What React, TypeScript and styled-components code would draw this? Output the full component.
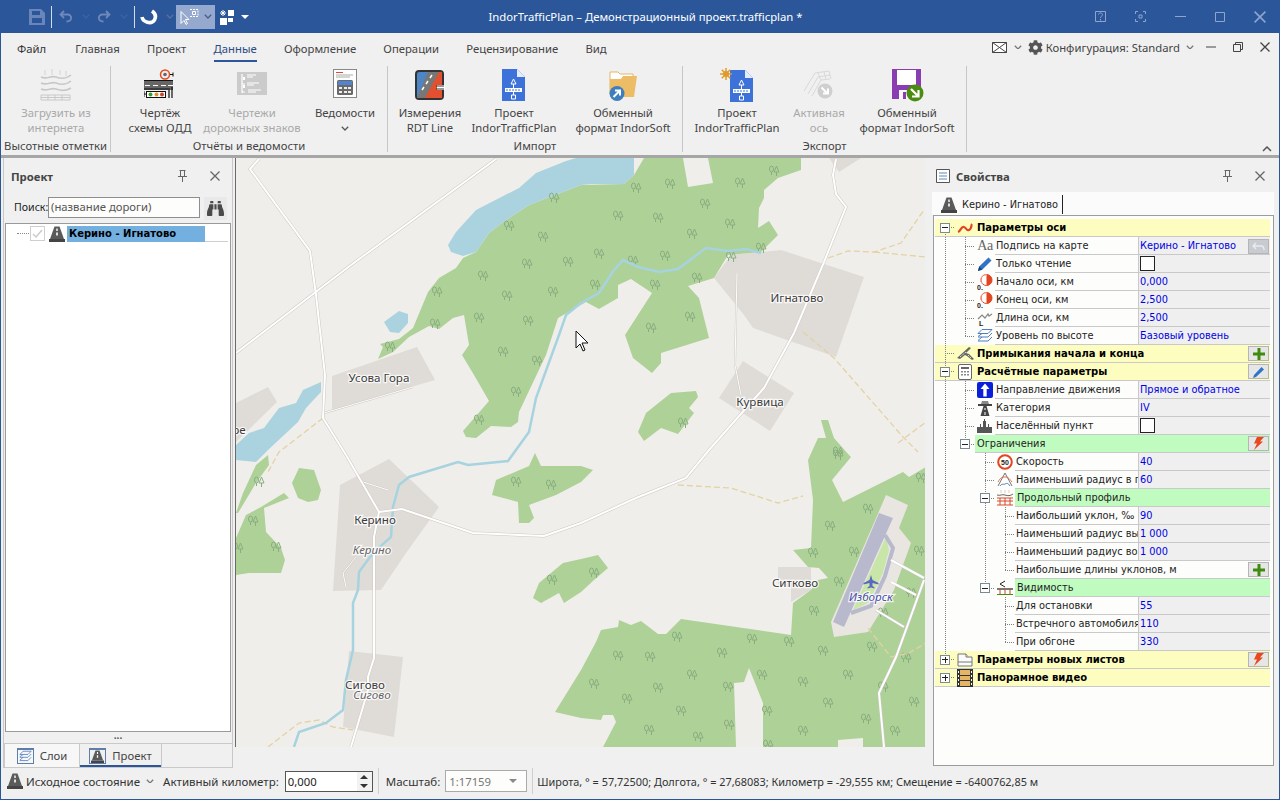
import React from 'react';
import styled, { createGlobalStyle, css } from 'styled-components';
import { FaBinoculars, FaCog } from 'react-icons/fa';

const UI = '"Noto Sans", "Liberation Sans", sans-serif';
const GRID = '"DejaVu Sans", "Liberation Sans", sans-serif';

const Global = createGlobalStyle`
  html, body { margin: 0; padding: 0; background: #f0f0f0; }
  #root { width: 1280px; height: 800px; overflow: hidden; }
  * { box-sizing: border-box; }
`;

const Window = styled.div`
  width: 1280px;
  height: 800px;
  display: flex;
  flex-direction: column;
  background: #f0f0f0;
  border: 1px solid #2b579a;
  border-top: 0;
  font: 11.3px ${UI};
  color: #444;
`;

/* title bar */
const TitleBar = styled.div`
  height: 33px;
  margin: 0 -1px;
  flex: none;
  display: flex;
  align-items: center;
  background: #2b579a;
`;
const Qat = styled.div`
  width: 252px;
  flex: none;
  padding-left: 27px;
  display: flex;
  align-items: center;
  height: 33px;
`;
const QBtn = styled.div<{ $w: number; $on?: boolean }>`
  width: ${p => p.$w}px;
  height: 24px;
  flex: none;
  display: flex;
  align-items: center;
  justify-content: center;
  gap: 5px;
  ${p => p.$on && css`background: #95a8cd;`}
`;
const QSep = styled.div<{ $ml: number }>`
  width: 1px;
  height: 22px;
  margin-left: ${p => p.$ml}px;
  background: #d5dcea;
  flex: none;
`;
const Title = styled.div`
  flex: 1;
  text-align: center;
  color: #fff;
`;
const Caption = styled.div`
  width: 241px;
  flex: none;
  display: flex;
  justify-content: flex-end;
  color: #8ea5cd;
`;
const CapBtn = styled.div`
  width: 40px;
  height: 33px;
  display: flex;
  align-items: center;
  justify-content: center;
`;

/* ribbon */
const Tabs = styled.div`
  height: 29px;
  flex: none;
  display: flex;
  align-items: flex-start;
  padding: 7px 0 0 16px;
  gap: 27.2px;
`;
const Tab = styled.div<{ $on?: boolean; $file?: boolean }>`
  height: 22px;
  line-height: 17px;
  color: ${p => (p.$on ? '#2b4a80' : p.$file ? '#333' : '#444')};
  border-bottom: 2px solid ${p => (p.$on ? '#2b579a' : 'transparent')};
  ${p => p.$file && css`margin-right: 2px;`}
`;
const TopRight = styled.div`
  margin: -1px 0 0 auto;
  display: flex;
  align-items: center;
  height: 16px;
  padding-right: 9px;
  color: #444;
`;
const Gap = styled.span<{ $w: number }>`
  width: ${p => p.$w}px;
  flex: none;
`;
const Ribbon = styled.div`
  height: 93px;
  flex: none;
  display: flex;
  padding-top: 4px;
  position: relative;
`;
const Group = styled.div<{ $w: number }>`
  width: ${p => p.$w}px;
  height: 86px;
  flex: none;
  border-right: 1px solid #c6c6c6;
  display: flex;
  flex-direction: column;
`;
const GroupBody = styled.div<{ $pl?: number }>`
  height: 72px;
  flex: none;
  display: flex;
  padding-left: ${p => p.$pl || 0}px;
`;
const GroupLabel = styled.div`
  height: 16px;
  flex: none;
  line-height: 16px;
  text-align: center;
  white-space: nowrap;
`;
const Big = styled.div<{ $w: number; $off?: boolean; $push?: boolean; $ml?: number }>`
  width: ${p => p.$w}px;
  flex: none;
  display: flex;
  flex-direction: column;
  align-items: center;
  text-align: center;
  line-height: 15px;
  white-space: nowrap;
  color: ${p => (p.$off ? '#a9a9a9' : '#444')};
  margin-left: ${p => (p.$push ? 'auto' : `${p.$ml || 0}px`)};
`;
const BigIcon = styled.div`
  height: 38px;
  display: flex;
  align-items: center;
  justify-content: center;
  margin-bottom: 1px;
`;
const BigChev = styled.span`
  line-height: 14px;
`;
const Collapse = styled.div`
  position: absolute;
  right: 7px;
  bottom: 3px;
  color: #555;
  display: flex;
`;

/* body */
const Body = styled.div`
  height: 613px;
  flex: none;
  display: flex;
  border-top: 3px solid #a6a6a6;
`;
const Panel = styled.div<{ $w: number; $ml: number; $edge?: boolean }>`
  width: ${p => p.$w}px;
  margin-left: ${p => p.$ml}px;
  flex: none;
  display: flex;
  flex-direction: column;
  padding-top: 2px;
  ${p => p.$edge && css`
    border-left: 1px solid #c8c8c8;
    border-right: 1px solid #c8c8c8;
  `}
`;
const PanelHead = styled.div`
  height: 32px;
  flex: none;
  display: flex;
  align-items: center;
  color: #444;
  font-weight: 700;
`;
const PanelTitle = styled.span`
  margin-left: 7px;
`;
const HeadGlyph = styled.svg`
  margin: 0 6px;
`;
const HeadIcons = styled.div<{ $gap: number; $pr: number }>`
  margin-left: auto;
  display: flex;
  align-items: center;
  gap: ${p => p.$gap}px;
  padding-right: ${p => p.$pr}px;
  color: #666;
`;
const SearchRow = styled.div`
  height: 31px;
  flex: none;
  display: flex;
  align-items: flex-start;
  padding: 5px 0 0 10px;
  color: #222;
`;
const SearchText = styled.div`
  line-height: 20px;
  width: 34px;
  flex: none;
  font-size: 10.6px;
  white-space: nowrap;
`;
const SearchInput = styled.div`
  width: 152px;
  height: 21px;
  border: 1px solid #8e8e8e;
  background: #fdfdfb;
  padding-left: 2px;
  line-height: 18px;
  color: #555;
`;
const Binoc = styled.div`
  width: 23px;
  height: 23px;
  margin-left: 4px;
  color: #4a4a4a;
  background: #e9e9e9;
  display: flex;
  align-items: center;
  justify-content: center;
`;
const TreeBox = styled.div`
  flex: 1;
  margin: 0 1px;
  border: 1px solid #9a9a9a;
  background: #fff;
  padding-top: 1px;
`;
const TreeRow = styled.div`
  height: 18px;
  display: flex;
  align-items: center;
  border-bottom: 1px solid transparent;
  margin-right: 2px;
  background: linear-gradient(#cfcfcf, #cfcfcf) left 62px bottom / 100% 1px no-repeat;
`;
const TreeDots = styled.div`
  width: 12px;
  margin-left: 11px;
  border-top: 1px dotted #888;
`;
const TreeCheck = styled.div`
  width: 15px;
  height: 15px;
  margin: 0 4px 0 1px;
  border: 1px solid #cfcfcf;
  color: #c9c9c9;
  display: flex;
`;
const TreeSel = styled.div`
  width: 138px;
  height: 16px;
  margin-left: 2px;
  padding-left: 2px;
  background: #73b0e0;
  color: #000;
  font: 700 10px/16px ${GRID};
  white-space: nowrap;
`;
const Grip = styled.div`
  height: 11px;
  flex: none;
  text-align: center;
  font-size: 10px;
  line-height: 7px;
  font-weight: 700;
  color: #555;
`;
const Tabs2 = styled.div`
  height: 25px;
  flex: none;
  display: flex;
  border-top: 1px solid #c9c9c9;
  border-bottom: 1px solid #c9c9c9;
`;
const BottomTab = styled.div<{ $w: number; $on?: boolean }>`
  width: ${p => p.$w}px;
  display: flex;
  align-items: center;
  justify-content: center;
  gap: 6px;
  background: ${p => (p.$on ? '#f0f0f0' : '#f7f7f7')};
  border-right: 1px solid #c9c9c9;
  border-left: ${p => (p.$on ? '0' : '1px solid #c9c9c9')};
  ${p => p.$on && css`box-shadow: inset 0 -2px 0 #2b579a;`}
`;
const TabIconFrame = styled.div`
  display: flex;
  border: 1px solid #5e7ea8;
  border-top-width: 2px;
  padding: 0 1px;
`;
const MapPane = styled.div`
  width: 690px;
  margin-left: 2px;
  flex: none;
  height: 589px;
  border-left: 1px solid #6a6a6a;
  overflow: hidden;
  background: #f0eeea;
  display: flex;
`;

/* property grid */
const PropTabs = styled.div`
  height: 23px;
  flex: none;
  margin: 0 4px 0 2px;
  background: #fbfbfb;
  padding: 3px 0 0 9px;
  display: flex;
`;
const PropTab = styled.div`
  display: flex;
  align-items: center;
  gap: 5px;
  height: 19px;
  padding-right: 4px;
  border-right: 1px solid #222;
  color: #222;
  font: 9.8px ${GRID};
`;
const PropFrame = styled.div`
  flex: 1;
  margin: 0 4px 2px 3px;
  border: 1px solid #9c9c9c;
  background: #fdfdfb;
  padding: 3px 1px 0 1px;
`;
const Row = styled.div<{ $group?: boolean }>`
  height: 18px;
  width: 335px;
  display: flex;
  font: 9.8px/17px ${GRID};
  color: #222;
  ${p => p.$group && css`
    background: #fdfdc0;
    border-bottom: 1px solid #c9c9c9;
    color: #000;
    font-size: 10px;
    font-weight: 700;
  `}
`;
const line = (dir: string) => `repeating-linear-gradient(${dir}, #808080 0 1px, transparent 1px 2px)`;
const vFull = `${line('to bottom')} center top / 1px 100% no-repeat`;
const vTop = `${line('to bottom')} center top / 1px 50% no-repeat`;
const vBot = `${line('to bottom')} center bottom / 1px 50% no-repeat`;
const hRight = `${line('to right')} right center / 50% 1px no-repeat`;
const cellBg: Record<string, string> = {
  ' ': 'none',
  v: vFull,
  t: `${vFull}, ${hRight}`,
  l: `${vTop}, ${hRight}`,
  a: `${vBot}, ${hRight}`,
  b: `${vFull}, ${hRight}`,
  c: `${vTop}, ${hRight}`,
  d: `${vTop}, ${hRight}`,
  e: hRight,
};
const Cell = styled.div<{ $k: string }>`
  width: 20px;
  height: 100%;
  flex: none;
  display: flex;
  align-items: center;
  justify-content: center;
  background: ${p => cellBg[p.$k]};
`;
const Box = styled.div<{ $plus?: boolean }>`
  width: 10px;
  height: 10px;
  border: 1px solid #7c8a96;
  background:
    linear-gradient(#222, #222) center / 6px 1px no-repeat,
    ${p => (p.$plus ? 'linear-gradient(#222, #222) center / 1px 6px no-repeat,' : '')}
    #fff;
`;
const IconCell = styled.div`
  width: 20px;
  height: 100%;
  flex: none;
  display: flex;
  align-items: center;
  justify-content: center;
`;
const AaGlyph = styled.span`
  font: 14px/18px "Liberation Serif", serif;
  color: #666;
  letter-spacing: -0.5px;
`;
const Label = styled.div<{ $tone?: 'plain' | 'green' | 'group' }>`
  flex: 1;
  min-width: 0;
  height: 18px;
  padding-left: ${p => (p.$tone === 'group' ? 2 : 1)}px;
  white-space: nowrap;
  overflow: hidden;
  display: flex;
  justify-content: space-between;
  ${p => p.$tone === 'plain' && css`border-bottom: 1px solid #c9c9c9;`}
  ${p => p.$tone === 'green' && css`
    background: #c0fcc0;
    border-bottom: 1px solid #c9c9c9;
    padding-left: 2px;
  `}
`;
const Left = styled.div<{ $full?: boolean }>`
  width: ${p => (p.$full ? '335px' : '203px')};
  flex: none;
  display: flex;
`;
const Value = styled.div`
  flex: 1;
  height: 18px;
  background: #efefef;
  border-left: 1px solid #c9c9c9;
  border-bottom: 1px solid #c9c9c9;
  color: #0000e6;
  padding-left: 1px;
  display: flex;
  align-items: center;
  justify-content: space-between;
  line-height: 17px;
`;
const Check = styled.div`
  width: 15px;
  height: 15px;
  border: 1px solid #222;
  background: #fdfdfb;
`;
const MiniBtn = styled.div<{ $off?: boolean }>`
  width: 21px;
  height: 15px;
  margin: 1px 1px 0 0;
  flex: none;
  background: ${p => (p.$off ? '#c8ccd0' : '#e6e6e6')};
  border: 1px solid #b5b5b5;
  display: flex;
  align-items: center;
  justify-content: center;
`;

/* status bar */
const Status = styled.div`
  flex: 1;
  display: flex;
  align-items: center;
  padding: 0 0 4px 6px;
  color: #333;
  margin-top: -1px;
`;
const StatusText = styled.div<{ $ml?: number }>`
  margin-left: ${p => p.$ml || 0}px;
  white-space: nowrap;
  font-size: 11.5px;
`;
const Coords = styled.div`
  margin-left: 4px;
  white-space: nowrap;
  font-size: 10.9px;
`;
const StatusChev = styled.span`
  margin: 0 9px 0 6px;
  display: flex;
`;
const Spin = styled.div`
  width: 88px;
  height: 21px;
  margin-left: 6px;
  border: 1px solid #555;
  background: #fff;
  padding-left: 2px;
  display: flex;
  align-items: center;
  justify-content: space-between;
  color: #222;
`;
const SpinArrows = styled.div`
  width: 15px;
  height: 19px;
  display: flex;
  flex-direction: column;
  align-items: center;
  justify-content: space-between;
  padding: 3px 0;
  background: #f2f2f2;
`;
const Combo = styled.div`
  width: 82px;
  height: 22px;
  margin-left: 5px;
  border: 1px solid #ababab;
  background: #fdfdfb;
  padding: 0 9px 0 3px;
  display: flex;
  align-items: center;
  justify-content: space-between;
  color: #777;
`;
const StatusSep = styled.div<{ $ml: number }>`
  width: 1px;
  height: 26px;
  margin-left: ${p => p.$ml}px;
  background: #cfcfcf;
  flex: none;
`;

/* small drawings */
const Chev = ({ c = '#777', s = 8 }: { c?: string; s?: number }) => (
  <svg width={s} height={s * 0.6} viewBox="0 0 10 6"><path d="M1 1l4 4 4-4" fill="none" stroke={c} strokeWidth="1.6" /></svg>
);
const Tri = ({ c = '#fff' }: { c?: string }) => (
  <svg width="8" height="4" viewBox="0 0 8 4"><path d="M0 0h8L4 4z" fill={c} /></svg>
);
const Pin = () => (
  <svg width="11" height="12" viewBox="0 0 11 12" fill="none" stroke="#666"><path d="M2.5.5h6M3.5.5v6M7.5.5v6M1 6.5h9M5.5 7v5" /></svg>
);
const Close = ({ s = 10, c = '#666' }: { s?: number; c?: string }) => (
  <svg width={s} height={s} viewBox="0 0 10 10"><path d="M.5.5l9 9M9.5.5l-9 9" stroke={c} strokeWidth="1.3" /></svg>
);
const Road = ({ s = 16 }: { s?: number }) => (
  <svg width={s} height={s} viewBox="0 0 16 16">
    <path d="M5.5 0.5h5L15 13H1z" fill="#5a5a5a" />
    <path d="M7.3 2.5h1.4v2.5H7.3zM7.2 6.5h1.6v3H7.2z" fill="#fff" />
    <path d="M0 13h16v3H0z" fill="#444" />
  </svg>
);
const Layers = ({ s = 15 }: { s?: number }) => (
  <svg width={s} height={s} viewBox="0 0 16 16" fill="none" stroke="#4f7fc0">
    <path d="M5 1.5h10l-4 4H1zM1 8.5l4-3M15 5l-4 4H1M1 12.500l4-3.500M15 9l-4 4H1" />
  </svg>
);

const Doc = () => (
  <g>
    <path d="M0 0h15l8 8v24H0z" fill="#3d73d8" />
    <path d="M15 0l8 8h-8z" fill="#e4edfb" />
    <path d="M11.500 10l-2.500 5h5zM11.500 15v4M11.500 23v3M9.500 26h4v4h-4z" fill="none" stroke="#fff" />
    <path d="M3 19h17v4H3z" fill="#fff" />
    <path d="M4 21h15" stroke="#3d73d8" strokeDasharray="2 1" />
  </g>
);

const RibbonIcons: Record<string, React.ReactNode> = {
  web: (
    <svg width="32" height="32" viewBox="0 0 32 32" fill="none" stroke="#c8c8c8">
      <path d="M5 1v5M12 0v6M20 1v5M26 2v5" strokeWidth="2" stroke="#e2e2e2" />
      <path d="M1 8c6 3 10-2 15 0s10 2 15-2M1 14c6 3 10-2 15 0s10 2 15-2M1 20c6 3 10-2 15 0s10 2 15-1" strokeWidth="1.600" />
      <path d="M1 26h29v5H1zM1 28.500h29M8 26v5M15 26v5M22 26v5" />
    </svg>
  ),
  odd: (
    <svg width="32" height="32" viewBox="0 0 32 32">
      <circle cx="21" cy="5.500" r="4.500" fill="#eee" stroke="#e34a1f" strokeWidth="1.500" />
      <circle cx="21" cy="5.500" r="1.800" fill="#666" />
      <path d="M26 5.500h3M29 3.500v4" stroke="#111" />
      <path d="M0 11h29v1H0z" fill="#111" />
      <path d="M0 12h29v9H0z" fill="#666" />
      <path d="M1 16h5v1H1zM9 16h5v1H9zM17 16h5v1h-5zM24 16h5v1h-5z" fill="#fff" />
      <path d="M0 20h26M25 21v8M28 18v11" stroke="#111" strokeWidth="1.200" />
      <rect x="2.500" y="22.500" width="19" height="6" fill="#fff" stroke="#111" />
      <circle cx="6.500" cy="25.500" r="2" fill="#3b9a32" />
      <circle cx="12.500" cy="25.500" r="2" fill="#e0902b" />
      <circle cx="18" cy="25.500" r="2" fill="#c9482a" />
      <path d="M0 22v6M0 25h2" stroke="#111" />
    </svg>
  ),
  signs: (
    <svg width="30" height="26" viewBox="0 0 30 26">
      <path d="M0 0h30v23H0z" fill="#cbcbcb" />
      <path d="M5 2v19M5 12h3M5 20h3" stroke="#fff" strokeWidth="1.200" fill="none" />
      <path d="M10 3h9M10 5h6M10 11h12M10 13h7M11 18h13M11 20h8" stroke="#fff" />
      <path d="M6 5h2v3H6zM6 13h2v3H6z" fill="#fff" />
    </svg>
  ),
  sheet: (
    <svg width="25" height="32" viewBox="0 0 25 32">
      <rect x=".5" y=".5" width="23" height="28" fill="#fff" stroke="#888" />
      <path d="M3 3h7v1H3z" fill="#e24a2a" />
      <path d="M3 6h17M3 8h14" stroke="#aaa" />
      <rect x="4" y="11" width="16" height="15" rx="1.500" fill="#6a6a6a" />
      <path d="M5 12h14v4H5z" fill="#4f86cf" />
      <path d="M6 18h3v2H6zM11 18h3v2h-3zM15 18h3v2h-3zM6 22h3v2H6zM11 22h3v2h-3zM15 22h3v2h-3z" fill="#eee" />
    </svg>
  ),
  rdt: (
    <svg width="30" height="30" viewBox="0 0 30 30">
      <rect x="1" y="1" width="27" height="28" rx="3" fill="#4e85c5" stroke="#333" strokeWidth="2" />
      <path d="M22 2h5v26H2z" fill="#e2502f" />
      <path d="M13 2h11L10 28H2z" fill="#777" />
      <path d="M17 5l-2 3M13 11l-2 3M9 17l-2 3" stroke="#fff" strokeWidth="1.500" />
      <path d="M22 15h8v5h-8z" fill="#fff" />
      <path d="M21 16h8M21 19h8" stroke="#333" />
    </svg>
  ),
  proj: (
    <svg width="24" height="32" viewBox="0 0 24 32"><Doc /></svg>
  ),
  folder: (
    <svg width="32" height="32" viewBox="0 0 32 32">
      <path d="M3 3h8l2 2h13v20H3z" fill="#fff" stroke="#e3b862" />
      <path d="M3 10h11l2-3h14l-3 21H3z" fill="#ecbc66" />
      <circle cx="10" cy="24.500" r="7.500" fill="#3d7fbd" />
      <path d="M6.500 28l6-6M8 21.500h5v5" stroke="#fff" strokeWidth="2" fill="none" />
    </svg>
  ),
  newproj: (
    <svg width="34" height="34" viewBox="0 0 34 34">
      <g transform="translate(10 2)"><Doc /></g>
      <circle cx="6" cy="6" r="3" fill="#e09a2b" />
      <path d="M6 0v12M0 6h12M1.800 1.800l8.400 8.400M10.200 1.800l-8.400 8.400" stroke="#e09a2b" strokeWidth="1.500" />
    </svg>
  ),
  axis: (
    <svg width="32" height="32" viewBox="0 0 32 32" fill="none" stroke="#d9d9d9">
      <path d="M1 22L12 4l14-2 2 8M5 25L15 8l12-2M9 27l9-16 9-1M15 4l3 7M21 3l2 7" />
      <circle cx="22" cy="22" r="7.500" fill="#cfcfcf" stroke="none" />
      <path d="M18.500 18.500l6 6M25 19.500v5h-5" stroke="#fff" strokeWidth="2" />
    </svg>
  ),
  disk: (
    <svg width="34" height="34" viewBox="0 0 34 34">
      <path d="M2 1h29v24l-6 6H2z" fill="#8a3db0" />
      <path d="M7 2h19v15H7z" fill="#fff" />
      <path d="M9 22h12v9H9z" fill="#f8f8f8" />
      <path d="M13 24h3v7h-3z" fill="#8a3db0" />
      <circle cx="25" cy="25" r="8.500" fill="#4b8b12" />
      <path d="M21 21l7 7M28.500 22v6.500H22" stroke="#fff" strokeWidth="2.200" fill="none" />
    </svg>
  ),
};

const propIcon = (k: string) => {
  switch (k) {
    case 'wave':
      return <svg width="16" height="12" viewBox="0 0 16 12"><path d="M1 10c3-1 3-6 6-5s2 4 5 3 2-5 3-6" fill="none" stroke="#e2451f" strokeWidth="2.200" /></svg>;
    case 'aa':
      return <AaGlyph>Aa</AaGlyph>;
    case 'pencil':
      return <svg width="16" height="16" viewBox="0 0 16 16"><path d="M1 15l1.200-4.500L11.500 1.500l3 3-9.300 9.200z" fill="#2f74c8" /><path d="M1 15l1.200-4.500 3 3z" fill="#1a3f70" /></svg>;
    case 'half':
      return (
        <svg width="16" height="16" viewBox="0 0 16 16">
          <circle cx="9.500" cy="6" r="5.500" fill="#fff" stroke="#e2451f" />
          <path d="M9.500.5a5.500 5.500 0 0 1 0 11z" fill="#e2451f" />
          <path d="M9.500.5a5.500 5.500 0 0 0-4 9.500" fill="none" stroke="#f2a08a" />
          <text x="0" y="15.500" fontSize="7" fontWeight="700" fontFamily="Liberation Sans" fill="#222">0,</text>
        </svg>
      );
    case 'len':
      return <svg width="16" height="16" viewBox="0 0 16 16"><path d="M1 9l4-4 3 3 3-4 1 2 3-2" fill="none" stroke="#888" strokeWidth="1.200" /><text x="2" y="16" fontSize="7" fontWeight="700" fontFamily="Liberation Sans" fill="#222">L</text></svg>;
    case 'layers':
      return <Layers s={16} />;
    case 'junction':
      return <svg width="17" height="15" viewBox="0 0 17 15"><path d="M0 12L12 1l2 1-5 5 3 1 5 5-2 1-5-4-2-1-5 4z" fill="#666" /><path d="M3 11l6-5M11 9l3 3" stroke="#ddd" strokeDasharray="2 1" /></svg>;
    case 'calc':
      return <svg width="14" height="16" viewBox="0 0 14 16"><rect x=".5" y=".5" width="13" height="15" rx="1.500" fill="#fff" stroke="#666" /><path d="M3 3h8v2H3z" fill="#666" /><path d="M3 7h2v1.500H3zM6 7h2v1.500H6zM9 7h2v1.500H9zM3 10h2v1.500H3zM6 10h2v1.500H6zM9 10h2v1.500H9z" fill="#888" /></svg>;
    case 'dir':
      return <svg width="16" height="16" viewBox="0 0 16 16"><rect width="16" height="16" rx="2" fill="#0a1fd8" /><path d="M8 1.500l4.500 5.500H9.700v7.500H6.300V7H3.500z" fill="#fff" /></svg>;
    case 'cat':
      return <svg width="16" height="16" viewBox="0 0 16 16"><path d="M1 4h14v2H1z" fill="#444" /><path d="M6.500 6h3l3 10H3.500z" fill="#444" /><path d="M7.500 8h1v2h-1zM7.500 12h1v3h-1z" fill="#fff" /><path d="M5 1h6l1 3H4z" fill="#888" /></svg>;
    case 'city':
      return <svg width="16" height="16" viewBox="0 0 16 16"><path d="M0 15V9h3V6h1v3h2V3h1V1h1v2h1v6h2V6h1v3h3v6z" fill="#555" /></svg>;
    case 'speed':
      return <svg width="16" height="16" viewBox="0 0 16 16"><circle cx="8" cy="8" r="6.800" fill="#fff" stroke="#e2451f" strokeWidth="2" /><text x="8" y="10.500" textAnchor="middle" fontSize="7" fontWeight="700" fontFamily="Liberation Sans" fill="#222">50</text></svg>;
    case 'radius':
      return <svg width="16" height="16" viewBox="0 0 16 16" fill="none"><path d="M8 1L1 14M8 1l7 13" stroke="#777" /><path d="M1 10c3-5 4-5 7-5s4 1 7 5" stroke="#e2704f" /><path d="M3 14c2-3 3-1 5-2s3-1 5 2" stroke="#4f7fc0" /></svg>;
    case 'brick':
      return <svg width="16" height="16" viewBox="0 0 16 16" fill="none" stroke="#d9482a"><path d="M4 0v3M8 0v3M12 0v3" stroke="#f3c9bd" /><path d="M0 5c3 1 5-1 8 0s5 1 8-1" stroke="#666" /><path d="M0 8h16M0 11h16M0 15h16M3 8v7M8 8v7M13 8v7" /></svg>;
    case 'vis':
      return <svg width="16" height="16" viewBox="0 0 16 16" fill="none"><path d="M8 1L3 4l5 3" stroke="#222" /><path d="M0 9h16" stroke="#222" strokeWidth="1.200" /><path d="M3 9v5M8 9v5M13 9v5" stroke="#c9482a" /><path d="M0 14.500h16" stroke="#4b8b12" /></svg>;
    case 'sheets':
      return <svg width="16" height="14" viewBox="0 0 16 14" fill="#fbfbfb" stroke="#777"><path d="M1 1h8l2 3h4v9H1z" /><path d="M9 1v3h2M1 9h14" /></svg>;
    case 'film':
      return <svg width="16" height="18" viewBox="0 0 16 18"><path d="M0 0h16v18H0z" fill="#333" /><path d="M3 1h10v5H3zM3 7h10v4H3zM3 12h10v5H3z" fill="#e5b567" /><path d="M1 2h1v2H1zM1 6h1v2H1zM1 10h1v2H1zM1 14h1v2H1zM14 2h1v2h-1zM14 6h1v2h-1zM14 10h1v2h-1zM14 14h1v2h-1z" fill="#fff" /></svg>;
    default:
      return null;
  }
};

const Glyph = ({ k }: { k: string }) => {
  if (k === 'plus') return <svg width="12" height="12" viewBox="0 0 12 12"><path d="M4.500 0h3v4.500H12v3H7.500V12h-3V7.500H0v-3h4.500z" fill="#3f8a0f" /></svg>;
  if (k === 'pencil') return <svg width="12" height="12" viewBox="0 0 12 12"><path d="M0 12l1-3 7.500-8 2.500 2.500L3 11z" fill="#2f74c8" /></svg>;
  if (k === 'flash') return <svg width="11" height="13" viewBox="0 0 11 13"><path d="M4 0h7L7 4.500h3L1 13l3-6.500H1z" fill="#e8481c" /></svg>;
  return <svg width="13" height="9" viewBox="0 0 13 9" fill="none" stroke="#e8ecf0" strokeWidth="1.500"><path d="M1 4h8c2 0 3 1 3 4M4 1L1 4l3 3" /></svg>;
};

type PRow = { c: string; i?: string; t: string; v?: string; b?: string; g?: 'group' | 'green'; chk?: boolean; off?: boolean };

const rows: PRow[] = [
  { c: 'a', i: 'wave', t: 'Параметры оси', g: 'group' },
  { c: 'vt', i: 'aa', t: 'Подпись на карте', v: 'Керино - Игнатово', b: 'undo', off: true },
  { c: 'vt', i: 'pencil', t: 'Только чтение', chk: true },
  { c: 'vt', i: 'half', t: 'Начало оси, км', v: '0,000' },
  { c: 'vt', i: 'half', t: 'Конец оси, км', v: '2,500' },
  { c: 'vt', i: 'len', t: 'Длина оси, км', v: '2,500' },
  { c: 'vl', i: 'layers', t: 'Уровень по высоте', v: 'Базовый уровень' },
  { c: 't', i: 'junction', t: 'Примыкания начала и конца', g: 'group', b: 'plus' },
  { c: 'b', i: 'calc', t: 'Расчётные параметры', g: 'group', b: 'pencil' },
  { c: 'vt', i: 'dir', t: 'Направление движения', v: 'Прямое и обратное' },
  { c: 'vt', i: 'cat', t: 'Категория', v: 'IV' },
  { c: 'vt', i: 'city', t: 'Населённый пункт', chk: true },
  { c: 'vc', t: 'Ограничения', g: 'green', b: 'flash' },
  { c: 'v t', i: 'speed', t: 'Скорость', v: '40' },
  { c: 'v t', i: 'radius', t: 'Наименьший радиус в плане, м', v: '60' },
  { c: 'v b', i: 'brick', t: 'Продольный профиль', g: 'green' },
  { c: 'v vt', t: 'Наибольший уклон, ‰', v: '90' },
  { c: 'v vt', t: 'Наименьший радиус выпуклых кривых, м', v: '1 000' },
  { c: 'v vt', t: 'Наименьший радиус вогнутых кривых, м', v: '1 000' },
  { c: 'v vl', t: 'Наибольшие длины уклонов, м', b: 'plus' },
  { c: 'v c', i: 'vis', t: 'Видимость', g: 'green' },
  { c: 'v  t', t: 'Для остановки', v: '55' },
  { c: 'v  t', t: 'Встречного автомобиля, м', v: '110' },
  { c: 'v  l', t: 'При обгоне', v: '330' },
  { c: 'd', i: 'sheets', t: 'Параметры новых листов', g: 'group', b: 'flash' },
  { c: 'e', i: 'film', t: 'Панорамное видео', g: 'group' },
];

const PropRow = ({ r }: { r: PRow }) => {
  const full = !r.v && !r.chk;
  return (
    <Row $group={r.g === 'group'}>
      <Left $full={full}>
        {r.c.split('').map((k, i) => (
          <Cell key={i} $k={k}>
            {'abc'.includes(k) && <Box />}
            {'de'.includes(k) && <Box $plus />}
          </Cell>
        ))}
        {r.i && <IconCell>{propIcon(r.i)}</IconCell>}
        <Label $tone={r.g === 'group' ? 'group' : r.g === 'green' ? 'green' : 'plain'}>
          <span>{r.t}</span>
          {full && r.b && <MiniBtn><Glyph k={r.b} /></MiniBtn>}
        </Label>
      </Left>
      {!full && (
        <Value>
          {r.chk ? <Check /> : <span>{r.v}</span>}
          {r.b && <MiniBtn $off={r.off}><Glyph k={r.b} /></MiniBtn>}
        </Value>
      )}
    </Row>
  );
};

/* map */
const forests = [
  '377,359 382,347 379,344 398,339 412,328 427,292 438,278 455,268 462,258 475,252 488,233 505,220 528,205 580,185 623,184 633,175 643,158 682,158 687,187 712,183 707,158 800,158 800,170 777,178 763,190 763,198 758,208 757,228 768,221 777,235 760,252 727,255 713,278 687,286 698,298 708,338 660,353 660,363 651,373 632,358 624,335 651,293 630,279 617,285 617,298 598,309 585,302 557,318 545,355 518,412 517,422 510,427 490,426 475,438 465,437 462,431 488,401 473,375 461,355 468,345 463,315 452,318 438,329 428,326 408,337 392,352',
  '235,513 242,493 255,465 267,455 268,465 255,483 237,513',
  '291,483 298,468 313,470 320,490 317,500 307,502 297,498',
  '235,538 245,515 260,507 283,493 288,498 263,508 265,532 280,548 284,560 280,573 248,573 235,575',
  '637,432 645,413 670,393 695,391 697,397 688,408 693,413 677,434 660,428 643,441',
  '491,495 495,480 528,466 534,453 540,466 580,466 592,470 580,482 555,495 528,505 533,518 528,523 518,523 517,502',
  '532,598 538,583 562,563 580,559 597,555 607,568 593,580 580,592 563,603 558,593 540,603',
  '554,712 580,670 595,642 600,630 617,627 618,620 630,625 640,621 657,634 665,634 680,619 790,635 792,603 810,590 817,580 827,578 818,568 807,567 792,550 810,548 812,500 807,460 817,438 825,438 820,420 827,420 833,438 848,455 850,457 831,480 842,502 902,472 908,477 925,467 925,747 862,747 862,738 837,740 837,747 762,747 762,703 748,668 743,682 733,683 735,747 602,747 615,722 612,715 602,715 600,720 580,718',
];
const waters = [
  '383,322 398,311 407,314 407,323 398,333 389,332',
  '447,245 455,232 475,210 518,188 535,173 565,161 575,158 633,158 633,175 623,184 590,184 580,185 528,205 505,220 488,233 475,252 462,256 450,252',
  '320,382 302,390 295,403 278,408 263,428 248,433 235,445 235,460 255,462 267,450 297,422 305,408 320,392',
];
const places = [
  '331,376 416,347 434,380 331,410',
  '235,403 267,387 276,402 235,442',
  '713,278 730,255 780,250 863,277 835,357 752,328 743,315',
  '718,398 742,361 793,393 769,431',
  '828,158 860,158 838,172',
  '339,485 388,459 438,507 405,553 380,590 332,591',
  '348,651 402,657 393,737 342,727',
  '777,567 810,567 810,590 790,602 790,587 777,587',
];
const roads = [
  '258,159 249,169 309,251 315,295 324,375 322,418 345,455 378,512 373,537 373,658 367,677 367,690 350,747',
  '495,159 350,265 235,353',
  '378,512 401,509 472,533 543,536 580,523 635,498 685,478 708,450 763,388 793,333 823,262 845,207 835,194 832,175 835,159',
  '923,580 895,657 878,693 883,747',
  '890,560 923,578',
  '890,582 915,595',
  '875,610 903,627',
];
const thinRoads = [
  '323,413 412,387',
  '736,273 734,365 740,395',
  '362,482 387,490',
  '355,557 342,573 345,587',
];
const tracks = [
  '322,418 278,452 267,472',
  '827,258 847,251 873,252 900,243 923,210',
  '873,252 925,257',
  '802,332 833,358 902,437 917,452',
  '897,443 925,422',
  '677,485 730,488 777,503 802,496',
  '267,747 298,723 318,720 332,727 352,730',
  '867,628 890,657',
  '890,657 908,653 925,643',
];
const river = '293,747 298,732 325,723 342,710 345,680 352,650 352,603 357,590 358,572 372,553 390,537 392,507 398,485 408,477 457,462 467,465 507,461 528,432 535,398 558,335 565,315 580,303 598,293 613,270 622,260 637,267 658,272 677,269 705,248 727,251 745,249 760,253';
const trees = [
  [508,226],[542,237],[526,264],[567,262],[482,276],[436,292],[506,296],[552,292],[478,318],[527,321],[434,324],[389,347],[502,352],[536,361],[515,392],[478,420],[553,198],
  [773,171],[669,184],[739,183],[635,188],[704,204],[617,216],[657,218],[729,224],[691,234],[598,254],[664,256],[632,261],[594,285],[654,285],[696,278],[689,317],[650,328],[682,423],[730,257],[760,248],[837,452],
  [515,482],[550,485],[252,521],[275,547],[237,548],[551,580],[258,482],
  [837,455],[867,509],[829,526],[812,553],[853,552],[918,551],[838,582],[813,611],[676,637],[751,639],[788,642],[721,653],[617,656],[649,657],[822,651],[871,647],[905,658],[761,675],[691,675],[847,675],[593,684],[657,688],[727,687],[802,682],[626,699],[680,711],[827,703],[913,702],[766,711],[865,719],[648,730],[728,725],[802,731],[894,731],[697,737],[767,745],[593,573],[882,613],[910,593],[882,687],[920,478],
];
const labels: [string, number, number, boolean?, string?][] = [
  ['Усова Гора', 378, 382],
  ['Игнатово', 796, 302],
  ['Курвица', 759, 406],
  ['Керино', 374, 524],
  ['Керино', 371, 554, true, '#666'],
  ['Сигово', 364, 689],
  ['Сигово', 371, 699, true, '#666'],
  ['Ситково', 794, 587],
  ['Изборск', 870, 601, true, '#4a4ea8'],
  ['ре', 238, 434],
];

const MapSvg = styled.svg`
  width: 690px;
  height: 589px;
  flex: none;
  display: block;
  font-family: "Noto Sans", sans-serif;
  font-size: 11.6px;
`;
const MapLabel = styled.text<{ $i?: boolean }>`
  paint-order: stroke;
  stroke: rgba(255, 255, 255, 0.8);
  stroke-width: 2.5px;
  text-anchor: middle;
  font-style: ${p => (p.$i ? 'italic' : 'normal')};
`;

const MapView = () => (
  <MapSvg viewBox="235 158 690 589">
    <defs>
      <g id="tree" fill="none" stroke="#88ae7f" strokeWidth="1">
        <ellipse cx="-2.500" cy="-2" rx="2" ry="3" />
        <path d="M-2.500 1v3M2.500 -5l2.500 6h-5zM2.500 1v4" />
      </g>
    </defs>
    <rect x="235" y="158" width="690" height="589" fill="#f0eeea" />
    {places.map((p, i) => <polygon key={i} points={p} fill="#dfdcd8" />)}
    {forests.map((p, i) => <polygon key={i} points={p} fill="#aed198" />)}
    {waters.map((p, i) => <polygon key={i} points={p} fill="#aad3df" />)}
    <polygon points="885,495 907,505 898,528 910,543 893,590 867,632 833,637 830,622" fill="#e9e6e1" />
    <polygon points="885,537 888,550 882,573 867,603 852,610" fill="#c8e6a8" />
    <polyline points="884,535 892,548 884,576 870,606 850,613" fill="none" stroke="#b9b9cd" strokeWidth="4" />
    <polygon points="878,513 892,518 843,627 832,622" fill="#b9b9cd" />
    {trees.map(([x, y], i) => <use key={i} href="#tree" x={x} y={y} />)}
    {tracks.map((p, i) => <polyline key={i} points={p} fill="none" stroke="#e2d2a4" strokeWidth="1.300" strokeDasharray="6 3" />)}
    <polyline points={river} fill="none" stroke="#a6d3df" strokeWidth="2.500" />
    {thinRoads.map((p, i) => (
      <g key={i} fill="none">
        <polyline points={p} stroke="#cfcbc6" strokeWidth="2" />
        <polyline points={p} stroke="#fdfdfd" strokeWidth="1" />
      </g>
    ))}
    {roads.map((p, i) => <polyline key={i} points={p} fill="none" stroke="#cdc9c4" strokeWidth="3" />)}
    {roads.map((p, i) => <polyline key={i} points={p} fill="none" stroke="#fff" strokeWidth="2" />)}
    <path d="M870 575l1.500 5 6 3v1.500l-6-1.500v3l2 1.500v1l-3.500-1-3.500 1v-1l2-1.500v-3l-6 1.500V583l6-3z" fill="#5a68c0" />
    {labels.map(([t, x, y, it, c], i) => (
      <MapLabel key={i} x={x} y={y} $i={it} fill={c || '#3c3c3c'}>{t}</MapLabel>
    ))}
    <path d="M575 331v17l4-4 3 7 2-1-3-7h6z" fill="#fff" stroke="#111" />
  </MapSvg>
);

export default function App() {
  return (
    <>
      <Global />
      <Window>
        <TitleBar>
          <Qat>
            <QBtn $w={20}>
              <svg width="16" height="16" viewBox="0 0 16 16" fill="#6a85b9"><path d="M0 0h12l4 4v12H0zM3 2v4h8V2zM3 9v5h10V9z" fillRule="evenodd" /></svg>
            </QBtn>
            <QSep $ml={4} />
            <QBtn $w={28}>
              <svg width="14" height="13" viewBox="0 0 14 13" fill="none" stroke="#6f88b9" strokeWidth="1.800"><path d="M5 1L1.500 4.500 5 8M2 4.500h6.500c5 0 5 7-1 7" /></svg>
            </QBtn>
            <QBtn $w={12}><Chev c="#3e649f" /></QBtn>
            <QBtn $w={24}>
              <svg width="14" height="13" viewBox="0 0 14 13" fill="none" stroke="#6f88b9" strokeWidth="1.800"><path d="M9 1l3.500 3.500L9 8M12 4.500H5.500c-5 0-5 7 1 7" /></svg>
            </QBtn>
            <QBtn $w={16}><Chev c="#3e649f" /></QBtn>
            <QSep $ml={2} />
            <QBtn $w={28}>
              <svg width="18" height="16" viewBox="0 0 18 16" fill="none"><path d="M2 8C3 13 11 16 14.500 11C16.500 7 15 4 12 2" stroke="#fff" strokeWidth="3.600" /></svg>
            </QBtn>
            <QBtn $w={13}><Chev c="#5d6f9c" /></QBtn>
            <QBtn $w={39} $on>
              <svg width="19" height="16" viewBox="0 0 19 16" fill="none" stroke="#fff"><path d="M1 2.500v12l3-3 2 4 1.500-1-2-4H9z" /><path d="M10 .5h8v7h-8" strokeDasharray="2 1" /><path d="M12.500 2.500h3v3h-3z" /></svg>
              <Chev c="#4d5d80" />
            </QBtn>
            <QBtn $w={23}>
              <svg width="16" height="16" viewBox="0 0 16 16" fill="#fff"><path d="M9 1h6v6H9zM1 9h7v7H1zM9 9h5v4H9z" /><path d="M4 1v6M1 4h6M2 2l4 4M6 2L2 6" stroke="#fff" /></svg>
            </QBtn>
            <QBtn $w={14}><Tri /></QBtn>
          </Qat>
          <Title>IndorTrafficPlan – Демонстрационный проект.trafficplan *</Title>
          <Caption>
            <CapBtn>
              <svg width="11" height="11" viewBox="0 0 11 11" fill="none" stroke="currentColor"><path d="M.5.5h10v10H.5z" /><path d="M3.500 3.500c0-2 4-2 4 0S5.500 5 5.500 7M5.500 8v1.500" /></svg>
            </CapBtn>
            <CapBtn>
              <svg width="11" height="11" viewBox="0 0 11 11" fill="none" stroke="currentColor"><path d="M.5 3V.5H3M8 .5h2.500V3M.5 8v2.500H3M10.500 8v2.500H8M4 4h3v3H4z" /></svg>
            </CapBtn>
            <CapBtn><svg width="11" height="11" viewBox="0 0 11 11"><path d="M0 5.500h11" stroke="currentColor" /></svg></CapBtn>
            <CapBtn><svg width="10" height="10" viewBox="0 0 10 10"><path d="M.5.500h9v9h-9z" fill="none" stroke="currentColor" /></svg></CapBtn>
            <CapBtn><Close s={12} c="#8ea5cd" /></CapBtn>
          </Caption>
        </TitleBar>

        <Tabs>
          <Tab $file>Файл</Tab>
          <Tab>Главная</Tab>
          <Tab>Проект</Tab>
          <Tab $on>Данные</Tab>
          <Tab>Оформление</Tab>
          <Tab>Операции</Tab>
          <Tab>Рецензирование</Tab>
          <Tab>Вид</Tab>
          <TopRight>
            <svg width="15" height="11" viewBox="0 0 15 11" fill="#fff" stroke="#444"><path d="M.5.500h14v10H.5zM.5.500l14 10M14.500.500l-14 10" /></svg>
            <Gap $w={7} />
            <Chev />
            <Gap $w={6} />
            <FaCog size={15} color="#555" />
            <Gap $w={3} />
            Конфигурация: Standard
            <Gap $w={6} />
            <Chev />
            <Gap $w={12} />
            <svg width="10" height="10" viewBox="0 0 10 10"><path d="M0 5h10" stroke="#444" strokeWidth="1" /></svg>
            <Gap $w={17} />
            <svg width="10" height="10" viewBox="0 0 10 10" fill="none" stroke="#444"><path d="M.5 2.500h7v7h-7zM2.500 2.500v-2h7v7h-2" /></svg>
            <Gap $w={17} />
            <Close s={10} c="#444" />
          </TopRight>
        </Tabs>

        <Ribbon>
          <Group $w={110}>
            <GroupBody>
              <Big $w={110} $off>
                <BigIcon>{RibbonIcons.web}</BigIcon>
                Загрузить из<br />интернета
              </Big>
            </GroupBody>
            <GroupLabel>Высотные отметки</GroupLabel>
          </Group>
          <Group $w={277}>
            <GroupBody $pl={3}>
              <Big $w={92}><BigIcon>{RibbonIcons.odd}</BigIcon>Чертёж<br />схемы ОДД</Big>
              <Big $w={92} $off><BigIcon>{RibbonIcons.signs}</BigIcon>Чертежи<br />дорожных знаков</Big>
              <Big $w={84} $push>
                <BigIcon>{RibbonIcons.sheet}</BigIcon>Ведомости<br />
                <BigChev><Chev c="#555" /></BigChev>
              </Big>
            </GroupBody>
            <GroupLabel>Отчёты и ведомости</GroupLabel>
          </Group>
          <Group $w={295}>
            <GroupBody $pl={2}>
              <Big $w={80}><BigIcon>{RibbonIcons.rdt}</BigIcon>Измерения<br />RDT Line</Big>
              <Big $w={88}><BigIcon>{RibbonIcons.proj}</BigIcon>Проект<br />IndorTrafficPlan</Big>
              <Big $w={104} $ml={13}><BigIcon>{RibbonIcons.folder}</BigIcon>Обменный<br />формат IndorSoft</Big>
            </GroupBody>
            <GroupLabel>Импорт</GroupLabel>
          </Group>
          <Group $w={284}>
            <GroupBody $pl={10}>
              <Big $w={88}><BigIcon>{RibbonIcons.newproj}</BigIcon>Проект<br />IndorTrafficPlan</Big>
              <Big $w={76} $off><BigIcon>{RibbonIcons.axis}</BigIcon>Активная<br />ось</Big>
              <Big $w={100}><BigIcon>{RibbonIcons.disk}</BigIcon>Обменный<br />формат IndorSoft</Big>
            </GroupBody>
            <GroupLabel>Экспорт</GroupLabel>
          </Group>
          <Collapse>
            <svg width="10" height="6" viewBox="0 0 10 6"><path d="M1 5l4-4 4 4" fill="none" stroke="#555" strokeWidth="1.500" /></svg>
          </Collapse>
        </Ribbon>

        <Body>
          <Panel $w={230} $ml={2} $edge>
            <PanelHead>
              <PanelTitle>Проект</PanelTitle>
              <HeadIcons $gap={22} $pr={12}>
                <Pin />
                <Close s={10} />
              </HeadIcons>
            </PanelHead>
            <SearchRow>
              <SearchText>Поиск:</SearchText>
              <SearchInput>(название дороги)</SearchInput>
              <Binoc><FaBinoculars size={17} /></Binoc>
            </SearchRow>
            <TreeBox>
              <TreeRow>
                <TreeDots />
                <TreeCheck>
                  <svg width="13" height="13" viewBox="0 0 13 13"><path d="M2 7l3 3 6-7" fill="none" stroke="currentColor" strokeWidth="1.400" /></svg>
                </TreeCheck>
                <Road s={16} />
                <TreeSel>Керино - Игнатово</TreeSel>
              </TreeRow>
            </TreeBox>
            <Grip>...</Grip>
            <Tabs2>
              <BottomTab $w={76}>
                <TabIconFrame><Layers s={13} /></TabIconFrame>
                Слои
              </BottomTab>
              <BottomTab $w={82} $on>
                <TabIconFrame><Road s={13} /></TabIconFrame>
                Проект
              </BottomTab>
            </Tabs2>
          </Panel>

          <MapPane><MapView /></MapPane>

          <Panel $w={348} $ml={5}>
            <PanelHead>
              <HeadGlyph width="14" height="14" viewBox="0 0 14 14" fill="#fff" stroke="#555"><path d="M.5.500h13v13H.5z" /><path d="M3 4h8M3 7h8M3 10h8" stroke="#5f86b8" /></HeadGlyph>
              Свойства
              <HeadIcons $gap={22} $pr={13}>
                <Pin />
                <Close s={10} />
              </HeadIcons>
            </PanelHead>
            <PropTabs>
              <PropTab>
                <Road s={16} />
                Керино - Игнатово
              </PropTab>
            </PropTabs>
            <PropFrame>
              {rows.map((r, i) => <PropRow key={i} r={r} />)}
            </PropFrame>
          </Panel>
        </Body>

        <Status>
          <Road s={16} />
          <StatusText $ml={3}>Исходное состояние</StatusText>
          <StatusChev><Chev /></StatusChev>
          <StatusText>Активный километр:</StatusText>
          <Spin>
            0,000
            <SpinArrows>
              <svg width="8" height="4" viewBox="0 0 8 4"><path d="M0 4h8L4 0z" fill="#333" /></svg>
              <Tri c="#333" />
            </SpinArrows>
          </Spin>
          <StatusSep $ml={5} />
          <StatusText $ml={7}>Масштаб:</StatusText>
          <Combo>1:17159<Tri c="#888" /></Combo>
          <StatusSep $ml={5} />
          <Coords>Широта, ° = 57,72500; Долгота, ° = 27,68083; Километр = -29,555 км; Смещение = -6400762,85 м</Coords>
        </Status>
      </Window>
    </>
  );
}
